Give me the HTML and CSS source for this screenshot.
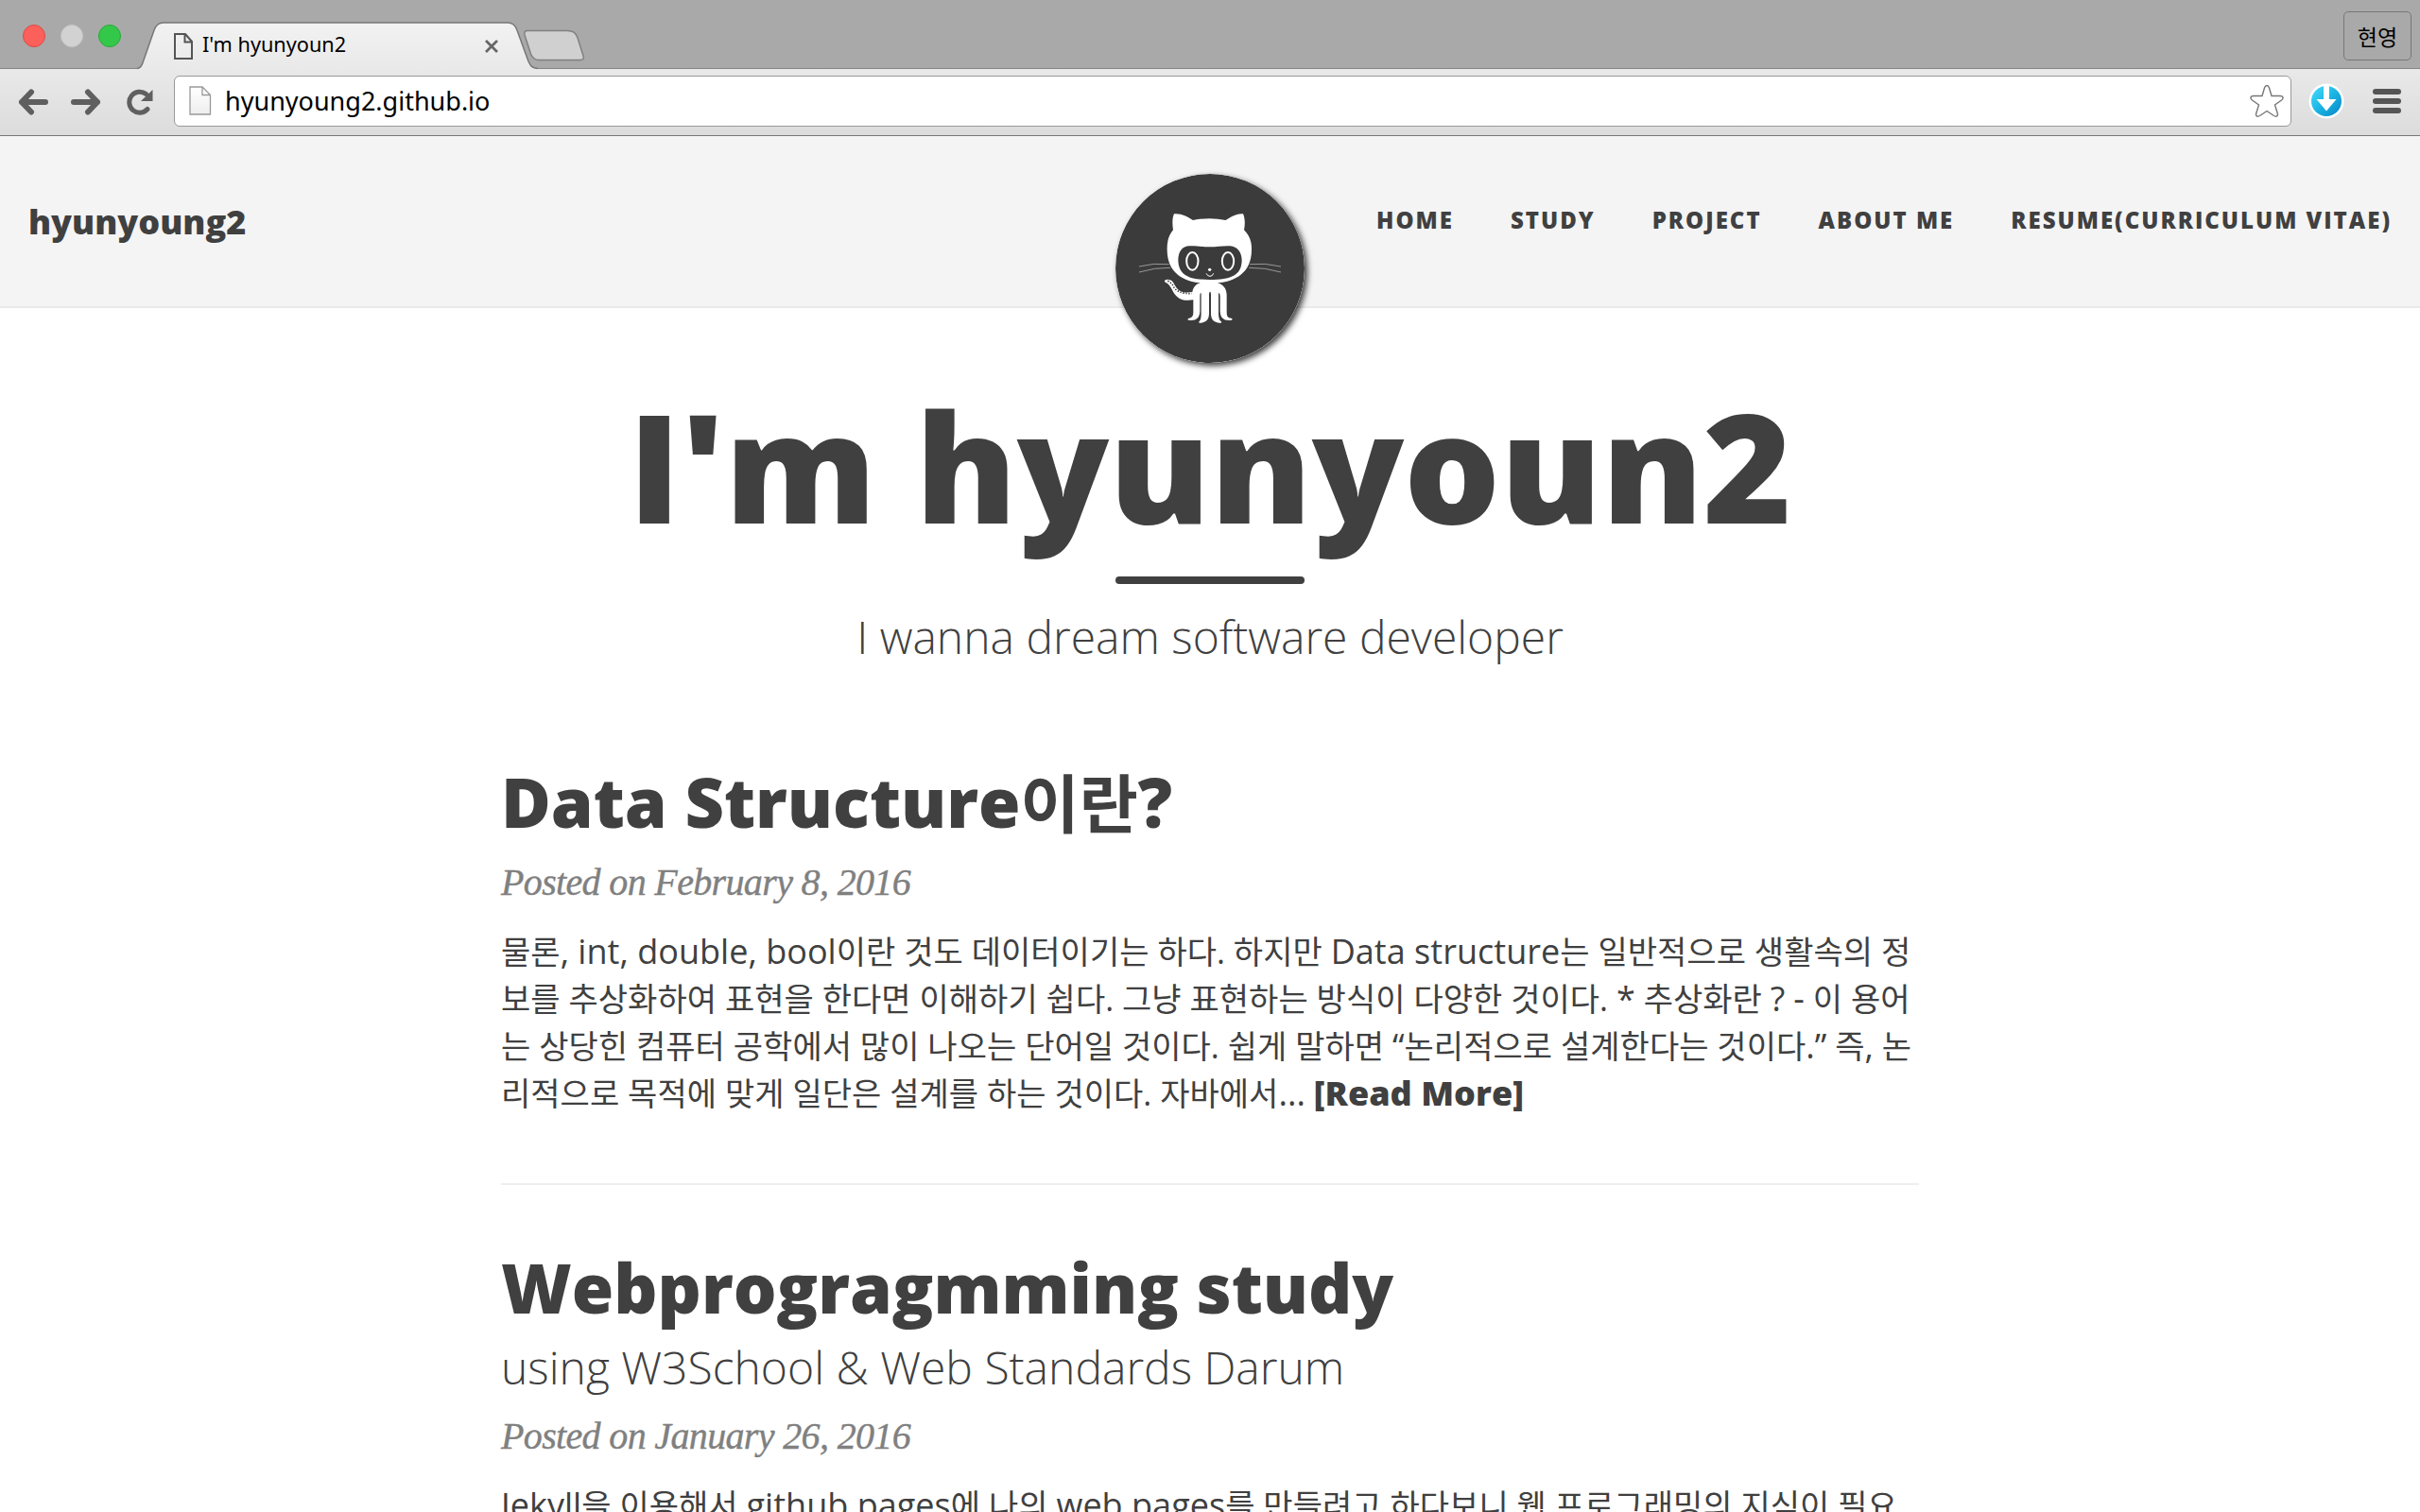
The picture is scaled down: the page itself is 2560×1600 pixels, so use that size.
FILE: index.html
```html
<!DOCTYPE html>
<html lang="ko">
<head>
<meta charset="utf-8">
<title>I'm hyunyoun2</title>
<link rel="stylesheet" href="styles.css">
</head>
<body>
<div class="chrome">
  <div class="tabstrip">
    <div class="lights"><i class="light red"></i><i class="light gray"></i><i class="light green"></i></div>
    <div class="tab">
      <svg class="tab-shape" width="424" height="51" viewBox="0 0 424 51">
        <defs><linearGradient id="tg" x1="0" y1="0" x2="0" y2="1"><stop offset="0" stop-color="#f2f2f2"/><stop offset="1" stop-color="#e9e9e9"/></linearGradient></defs>
        <path d="M0 51V49.500C4 49 5 46 6.500 42L18 9C20 3 23 1 28 1H392C397 1 400 3 402 9L414 42C416 46 417 49 424 49.500V51Z" fill="url(#tg)"/>
        <path d="M0 49.500C4 49 5 46 6.500 42L18 9C20 3 23 1 28 1H392C397 1 400 3 402 9L414 42C416 46 417 49 424 49.500" fill="none" stroke="#777" stroke-width="1.500"/>
      </svg>
      <svg class="tab-file" width="20" height="28" viewBox="0 0 20 28"><path d="M1 1H12L19 9V27H1ZM11.500 1V9.500H19" fill="none" stroke="#555" stroke-width="2"/></svg>
      <span class="tab-title">I'm hyunyoun2</span>
      <svg class="tab-close" width="16" height="16" viewBox="0 0 16 16"><path d="M2 2L14 14M14 2L2 14" stroke="#666" stroke-width="2.800"/></svg>
    </div>
    <svg class="newtab" width="66" height="36" viewBox="0 0 66 36"><path d="M5 1.500H47C54 1.500 56 4 58 9L64 28C65 31 64 32.500 61 32.500H17C12 32.500 10 30 8.500 26L2 6C1.500 3 2 1.500 5 1.500Z" fill="#d0d0d0" stroke="#808080" stroke-width="1.500"/></svg>
    <div class="user">현영</div>
  </div>
  <div class="toolbar">
    <svg class="back" width="32" height="28" viewBox="0 0 32 28"><path d="M14 3.500L4 14L14 24.500M4 14H29" fill="none" stroke="#5f5f5f" stroke-width="6" stroke-linecap="round" stroke-linejoin="round"/></svg>
    <svg class="forward" width="32" height="28" viewBox="0 0 32 28"><path d="M18 3.500L28 14L18 24.500M28 14H3" fill="none" stroke="#5f5f5f" stroke-width="6" stroke-linecap="round" stroke-linejoin="round"/></svg>
    <svg class="reload" width="28" height="28" viewBox="0 0 28 28"><path d="M22 21.500A11 11 0 1 1 20.500 5.500" fill="none" stroke="#5f5f5f" stroke-width="5" stroke-linecap="round"/><path d="M27.500 1V13H15Z" fill="#5f5f5f"/></svg>
    <div class="omnibox">
      <svg class="page-icon" width="24" height="32" viewBox="0 0 24 32"><defs><linearGradient id="pg" x1="0" y1="0" x2="0" y2="1"><stop offset="0" stop-color="#fff"/><stop offset="1" stop-color="#eee"/></linearGradient></defs><path d="M1 1H14L22.500 9.500V30H1ZM14 1V9.500H22.500" fill="url(#pg)" stroke="#999" stroke-width="1.300"/></svg>
      <span class="url">hyunyoung2.github.io</span>
      <svg class="star" width="36" height="36" viewBox="0 0 36 36"><path d="M18 1.500C19.500 1.500 20 2.500 20.500 4L23 12.500H32C35.500 12.500 36 15 33.500 17L26.500 22L29.300 31C30 34 28 35 25.500 33.500L18 28.500L10.500 33.500C8 35 6 34 6.700 31L9.500 22L2.500 17C0 15 .500 12.500 4 12.500H13L15.500 4C16 2.500 16.500 1.500 18 1.500Z" fill="#fff" stroke="#777" stroke-width="1.400"/></svg>
    </div>
    <svg class="download" width="38" height="38" viewBox="0 0 38 38"><defs><linearGradient id="dg" x1="0" y1="0" x2="1" y2="1"><stop offset="0" stop-color="#4adcfb"/><stop offset=".5" stop-color="#1bb5e4"/><stop offset="1" stop-color="#0784c4"/></linearGradient></defs><circle cx="19" cy="19" r="18.500" fill="#fff"/><circle cx="19" cy="19" r="16" fill="url(#dg)"/><path d="M16 2H22V17H29.500L19 29.500L8.500 17H16Z" fill="#fff"/></svg>
    <div class="menu"><i></i><i></i><i></i></div>
  </div>
</div>
<header class="navbar">
  <a class="brand">hyunyoung2</a>
  <svg class="avatar" viewBox="60 72 600 600">
    <circle cx="360" cy="372" r="300" fill="#3b3b3b"/>
    <path d="M246 199C265 196 288 206 306 219Q358 208 410 219C428 206 450 196 465 199C471 212 472 232 468 250C486 268 493 288 492 315C491 386 440 414 384 418C402 423 412 436 413 455V510C413 526 417 529 427 530C433 532 432 536 426 537C403 539 393 529 392 508V460Q391 450 387 450V510C387 530 390 537 395 540C399 544 395 546 389 545C370 543 363 533 363 514V455C363 443 357 443 357 455V514C357 533 350 543 331 545C325 546 322 544 327 539C331 535 332 528 332 510V450Q328 450 328 460V508C327 529 317 539 294 537C288 536 288 532 294 530C303 528 307 524 307 510V472C270 478 252 465 240 440C233 426 227 419 218 416C213 413 217 407 225 407C241 407 244 418 250 428C262 449 280 450 304 447C307 432 315 422 330 418C276 414 225 386 224 315C223 288 228 268 243 250C240 232 240 212 246 199Z" fill="#fff"/>
    <path d="M292 301C320 300 338 304 360 304S400 300 424 301C447 303 461 321 461 347C460 394 426 408 360 408S261 394 259 347C259 321 270 303 292 301Z" fill="#3b3b3b"/>
    <path d="M226 412Q238 418 243 428Q255 453 302 452" fill="none" stroke="#3b3b3b" stroke-width="5" stroke-dasharray="4 5"/>
    <ellipse cx="304" cy="349" rx="18.500" ry="28" fill="none" stroke="#fff" stroke-width="6"/>
    <ellipse cx="417" cy="349" rx="18.500" ry="28" fill="none" stroke="#fff" stroke-width="6"/>
    <circle cx="359" cy="376" r="5" fill="#fff"/>
    <path d="M348 388Q352 397 360 397T371 388" fill="none" stroke="#fff" stroke-width="3"/>
    <path d="M135 366Q180 354 230 359M135 384Q184 369 234 370M486 359Q535 354 585 366M484 370Q535 369 585 384" fill="none" stroke="#bbb" stroke-width="2.200"/>
  </svg>
  <nav class="links"><a>HOME</a><a>STUDY</a><a>PROJECT</a><a>ABOUT ME</a><a>RESUME(CURRICULUM VITAE)</a></nav>
</header>
<main class="content">
  <section class="intro">
    <h1>I'm hyunyoun2</h1>
    <hr class="bar">
    <p class="tagline">I wanna dream software developer</p>
  </section>
  <article class="post first">
    <h2>Data Structure<b class="ko">이란</b>?</h2>
    <p class="date">Posted on February 8, 2016</p>
    <div class="text">
      <p>물론<b>, int, double, bool</b>이란 것도 데이터이기는 하다. 하지만 <b>Data structure</b>는 일반적으로 생활속의 정</p>
      <p>보를 추상화하여 표현을 한다면 이해하기 쉽다. 그냥 표현하는 방식이 다양한 것이다. <b>*</b> 추상화란 <b>?</b> <b>-</b> 이 용어</p>
      <p>는 상당힌 컴퓨터 공학에서 많이 나오는 단어일 것이다. 쉽게 말하면 <b>“</b>논리적으로 설계한다는 것이다<b>.”</b> 즉<b>,</b> 논</p>
      <p>리적으로 목적에 맞게 일단은 설계를 하는 것이다. 자바에서<b>...</b> <a class="more">[Read More]</a></p>
    </div>
  </article>
  <article class="post second">
    <h2>Webprogragmming study</h2>
    <h3>using W3School &amp; Web Standards Darum</h3>
    <p class="date">Posted on January 26, 2016</p>
    <div class="text">
      <p><b>Jekyll</b>을 이용해서 <b>github pages</b>에 나의 <b>web pages</b>를 만들려고 하다보니 웹 프로그래밍의 지식이 필요</p>
    </div>
  </article>
</main>
</body>
</html>
```
FILE: styles.css
```css
* { box-sizing: border-box; }
body { margin: 0; width: 2560px; height: 1600px; overflow: hidden; background: #fff; color: #404040; font-family: "Open Sans", "Noto Sans CJK KR", sans-serif; }
h1, h2, h3, p { margin: 0; white-space: nowrap; }
svg, i { display: block; flex: none; }

.chrome { height: 144px; border-bottom: 1px solid #777; background: #e4e4e4; }
.tabstrip { height: 73px; display: flex; align-items: flex-start; background: #a9a9a9; border-bottom: 1px solid #858585; }
.lights { display: flex; gap: 16px; padding: 26px 0 0 24px; width: 145px; flex: none; }
.light { width: 24px; height: 24px; border-radius: 50%; }
.red { background: #fc605b; border: 1px solid #dd4a46; }
.gray { background: #d2d2d2; border: 1px solid #c6c6c6; }
.green { background: #34c84a; border: 1px solid #26ab35; }
.tab { position: relative; margin-top: 23px; width: 424px; height: 51px; display: flex; align-items: center; padding: 0 41px 0 39px; flex: none; }
.tab-shape { position: absolute; left: 0; top: 0; }
.tab-file, .tab-title, .tab-close { position: relative; }
.tab-title { margin-left: 10px; padding-bottom: 3px; font: 21.7px/28px "Noto Sans", sans-serif; color: #000; flex: 1; }
.newtab { margin: 31px 0 0 -16px; }
.user { margin: 12px 9px 0 auto; width: 72px; height: 52px; border: 1px solid #777; border-radius: 5px; font: 23px/50px "Noto Sans CJK KR", sans-serif; color: #000; text-align: center; }
.toolbar { height: 70px; display: flex; align-items: flex-start; background: linear-gradient(#e9e9e9, #dcdcdc); }
.back { margin: 21px 0 0 19px; }
.forward { margin: 21px 0 0 24px; }
.reload { margin: 21px 0 0 27px; }
.omnibox { margin: 7px 0 0 22px; width: 2240px; height: 54px; border: 1px solid #999; border-radius: 6px; background: #fff; display: flex; align-items: center; padding: 0 7px 0 15px; }
.url { font: 27px/40px "Noto Sans", sans-serif; color: #000; margin-left: 14px; flex: 1; }
.download { margin: 15px 0 0 18px; }
.menu { margin: 21px 0 0 30px; width: 30px; display: grid; gap: 4px; }
.menu i { height: 6px; border-radius: 3px; background: #555; }

.navbar { height: 182px; border-bottom: 2px solid #eaeaea; background: #f4f4f4; display: flex; position: relative; padding: 60px 30px 0; justify-content: space-between; }
.brand { font-size: 36px; font-weight: 800; line-height: 62px; }
.links { display: flex; gap: 60px; font-size: 24px; font-weight: 800; line-height: 58px; letter-spacing: 2px; }
.avatar { position: absolute; left: 1180px; top: 40px; width: 200px; height: 200px; border-radius: 50%; box-shadow: 3px 3px 6px #000000c0; }

.content { width: 1500px; margin: 0 auto; }
.intro { text-align: center; padding-top: 78px; }
h1 { font-size: 160px; font-weight: 800; line-height: 176px; }
.bar { width: 200px; height: 8px; border: 0; border-radius: 4px; background: #404040; margin: 30px auto 0; }
.tagline { font-size: 48px; font-weight: 300; line-height: 60px; margin-top: 26px; }
h2 { font-size: 72px; font-weight: 800; line-height: 80px; }
h2 .ko { font: 700 67.5px/0 "Noto Sans CJK KR", sans-serif; }
h3 { font-size: 48px; font-weight: 300; line-height: 54px; }
.date { font: italic 40px/44px "Liberation Serif", serif; letter-spacing: -.65px; color: #808080; -webkit-text-stroke: .4px #808080; }
.text { font-size: 34px; line-height: 50px; letter-spacing: .03px; }
.text p { height: 50px; }
.text b { font-size: 36px; font-weight: 400; line-height: 0; }
.more { font-size: 36px; font-weight: 800; line-height: 0; }
.first { padding-top: 104px; height: 550px; border-bottom: 2px solid #eee; }
.first .date { margin-top: 24px; }
.first .text { margin-top: 26px; }
.second { padding-top: 68px; }
.second h3 { margin-top: 18px; }
.second .date { margin-top: 24px; }
.second .text { margin-top: 26px; }
```
